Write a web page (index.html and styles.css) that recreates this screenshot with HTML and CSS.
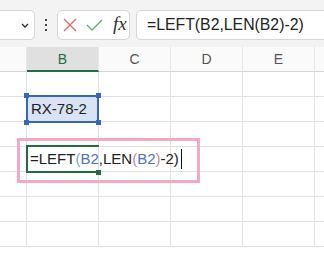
FILE: index.html
```html
<!DOCTYPE html>
<html lang="ja">
<head>
  <meta charset="UTF-8" />
  <title>Excel LEFT LEN</title>
  <link rel="stylesheet" href="styles.css">
</head>
<body>
  <div class="toolbar">
    <div class="name-box">
      <svg class="chevron" width="8" height="5" viewBox="0 0 8 5"><path d="M1 1 L4 4 L7 1" fill="none" stroke="#333" stroke-width="1.4"/></svg>
    </div>
    <div class="dots"><span></span><span></span><span></span></div>
    <div class="fx-buttons">
      <svg width="14" height="14" viewBox="0 0 14 14"><path d="M1 1 L13 13 M13 1 L1 13" stroke="#e0686a" stroke-width="1.3"/></svg>
      <svg width="17" height="13" viewBox="0 0 17 13"><path d="M1 6 L6 11 L16 1" fill="none" stroke="#5faf73" stroke-width="1.3"/></svg>
      <span class="fx">fx</span>
    </div>
    <div class="formula-bar">=LEFT(B2,LEN(B2)-2)</div>
  </div>

  <div class="sheet">
    <div class="grid">
      <div class="head"></div>
      <div class="head active">B</div>
      <div class="head">C</div>
      <div class="head">D</div>
      <div class="head">E</div>
      <div class="head"></div>

      <div class="cell"></div><div class="cell"></div><div class="cell"></div><div class="cell"></div><div class="cell"></div><div class="cell"></div>

      <div class="cell"></div>
      <div class="cell selected">
        <span class="value">RX-78-2</span>
        <i class="handle tl"></i><i class="handle tr"></i><i class="handle bl"></i><i class="handle br"></i>
      </div>
      <div class="cell"></div><div class="cell"></div><div class="cell"></div><div class="cell"></div>

      <div class="cell"></div><div class="cell"></div><div class="cell"></div><div class="cell"></div><div class="cell"></div><div class="cell"></div>

      <div class="cell"></div>
      <div class="cell editing">
        <span class="value">=LEFT<span class="p1">(</span><span class="ref">B2</span>,LEN<span class="p2">(</span><span class="ref">B2</span><span class="p2">)</span>-2)<i class="caret"></i></span>
        <i class="fill-handle"></i>
      </div>
      <div class="cell"></div><div class="cell"></div><div class="cell"></div><div class="cell"></div>

      <div class="cell"></div><div class="cell"></div><div class="cell"></div><div class="cell"></div><div class="cell"></div><div class="cell"></div>
      <div class="cell"></div><div class="cell"></div><div class="cell"></div><div class="cell"></div><div class="cell"></div><div class="cell"></div>
      <div class="cell"></div><div class="cell"></div><div class="cell"></div><div class="cell"></div><div class="cell"></div><div class="cell"></div>
    </div>
    <div class="highlight"></div>
  </div>
</body>
</html>
```

FILE: styles.css
```css
:root {
  --grid-line: #e1e1e1;
  --excel-green: #1f6e43;
  --select-blue: #3566c0;
  --ref-blue: #4a74c2;
  --mark-pink: #f4a9c6;
}

* {
  box-sizing: border-box;
}

html,
body {
  margin: 0;
  padding: 0;
  width: 324px;
  height: 262px;
  overflow: hidden;
  background: #fff;
  font-family: 'Liberation Sans', Arial, sans-serif;
  color: #222;
}

/* top bar */
.toolbar {
  height: 47px;
  background: #f3f3f3;
  display: flex;
  align-items: flex-start;
  padding-top: 10px;
  overflow: hidden;
}

.name-box {
  flex: none;
  width: 41px;
  height: 30px;
  margin-left: -6px;
  background: #fff;
  border: 1px solid #d6d6d6;
  border-radius: 5px;
  display: flex;
  align-items: center;
  justify-content: flex-end;
  padding-right: 5px;
}

.dots {
  flex: none;
  width: 22px;
  height: 30px;
  display: flex;
  flex-direction: column;
  align-items: center;
  justify-content: center;
  gap: 3px;
}

.dots span {
  width: 2px;
  height: 2px;
  background: #444;
}

.fx-buttons {
  flex: none;
  width: 73px;
  height: 30px;
  background: #fff;
  border: 1px solid #d6d6d6;
  border-radius: 5px;
  display: flex;
  align-items: center;
  gap: 9px;
  padding-left: 5px;
}

.fx {
  font-family: 'Liberation Serif', 'Times New Roman', serif;
  font-style: italic;
  font-size: 19px;
  color: #333;
  margin-left: 1px;
  margin-top: -2px;
}

.formula-bar {
  flex: none;
  width: 200px;
  height: 30px;
  margin-left: 6px;
  background: #fff;
  border: 1px solid #d6d6d6;
  border-radius: 5px;
  padding-left: 10px;
  font-size: 15.8px;
  line-height: 28px;
  color: #222;
  white-space: nowrap;
}

/* sheet */
.sheet {
  position: relative;
  height: 215px;
  overflow: hidden;
}

.grid {
  display: grid;
  grid-template-columns: repeat(6, 72px);
  grid-auto-rows: 25px;
  margin-left: -45px;
}

.head {
  background: #fafafa;
  border-right: 1px solid #e6e6e6;
  border-bottom: 1px solid #d4d4d4;
  text-align: center;
  font-size: 14px;
  line-height: 25px;
  color: #555;
}

.head.active {
  background: #e0e0e0;
  color: var(--excel-green);
  border-bottom: 2px solid var(--excel-green);
  line-height: 24px;
}

.cell {
  position: relative;
  border-right: 1px solid var(--grid-line);
  border-bottom: 1px solid var(--grid-line);
}

.value {
  position: relative;
  z-index: 2;
  display: block;
  padding-left: 4px;
  font-size: 15px;
  line-height: 24px;
  height: 24px;
  white-space: nowrap;
}

.selected {
  background: #d9e3f4;
}

.selected::after {
  content: "";
  position: absolute;
  left: -1px;
  top: -2px;
  right: -1px;
  bottom: -2px;
  border: 2px solid var(--select-blue);
}

.handle {
  position: absolute;
  width: 5px;
  height: 5px;
  background: var(--select-blue);
  z-index: 3;
}

.handle.tl { left: -3px; top: -4px; }
.handle.tr { right: -3px; top: -4px; }
.handle.bl { left: -3px; bottom: -4px; }
.handle.br { right: -3px; bottom: -4px; }

.editing::before {
  content: "";
  position: absolute;
  left: -1px;
  top: -2px;
  right: -1px;
  bottom: -2px;
  border: 2px solid var(--excel-green);
  border-right: none;
  z-index: 1;
}

.editing .value {
  padding-left: 3px;
}

.p1 { color: #8aa2cf; }
.p2 { color: #c98a94; }
.ref { color: var(--ref-blue); }

.caret {
  position: absolute;
  width: 1px;
  height: 20px;
  top: 2px;
  margin-left: 2px;
  background: #111;
}

.fill-handle {
  position: absolute;
  right: -3px;
  bottom: -4px;
  width: 5px;
  height: 5px;
  background: var(--excel-green);
  z-index: 3;
}

/* annotation box */
.highlight {
  position: absolute;
  left: 17px;
  top: 91px;
  width: 183px;
  height: 45px;
  border: 3px solid var(--mark-pink);
  z-index: 4;
}
```
